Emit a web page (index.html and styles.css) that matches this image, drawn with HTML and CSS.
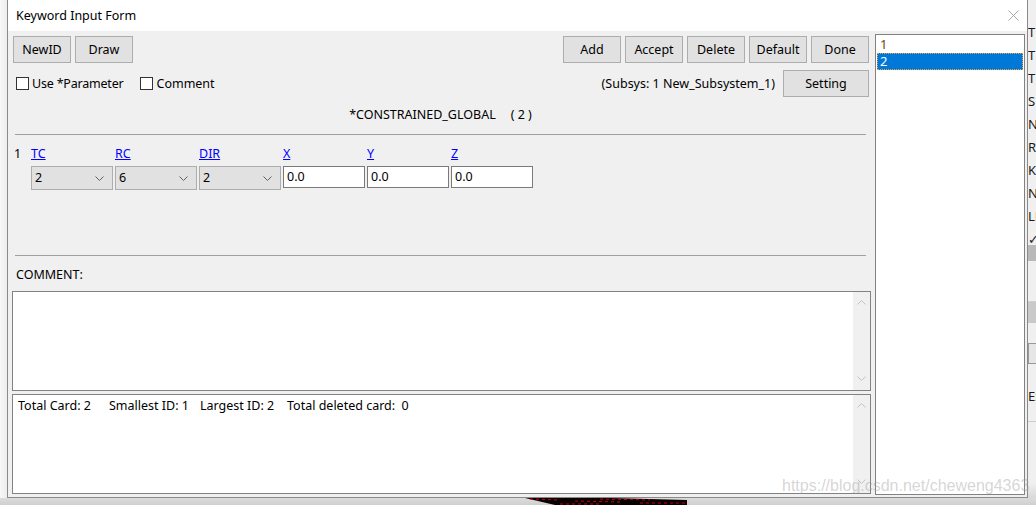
FILE: index.html
```html
<!DOCTYPE html>
<html>
<head>
<meta charset="utf-8">
<title>Keyword Input Form</title>
<link rel="stylesheet" href="styles.css">
</head>
<body>
<div class="desktop">
  <div class="left-bg"></div>

  <div class="window">
    <div class="titlebar">
      <span class="title">Keyword Input Form</span>
      <svg class="close" width="11" height="11" viewBox="0 0 11 11"><path d="M0.5 0.5 L10.5 10.5 M10.5 0.5 L0.5 10.5" stroke="#a8a8a8" stroke-width="1" fill="none"/></svg>
    </div>

    <div class="client">
      <div class="main">
        <div class="toolbar">
          <div class="btn-group">
            <button class="btn">NewID</button>
            <button class="btn">Draw</button>
          </div>
          <div class="btn-group">
            <button class="btn">Add</button>
            <button class="btn">Accept</button>
            <button class="btn">Delete</button>
            <button class="btn">Default</button>
            <button class="btn">Done</button>
          </div>
        </div>

        <div class="options">
          <label class="check"><span class="box"></span><span class="check-text">Use *Parameter</span></label>
          <label class="check check-second"><span class="box"></span>Comment</label>
          <span class="subsys">(Subsys: 1 New_Subsystem_1)</span>
          <button class="btn btn-wide">Setting</button>
        </div>

        <div class="keyword">*CONSTRAINED_GLOBAL<span class="count">( 2 )</span></div>

        <div class="sep sep-top"></div>

        <div class="card-grid card-labels">
          <span class="rownum">1</span>
          <a class="field-link">TC</a>
          <a class="field-link">RC</a>
          <a class="field-link">DIR</a>
          <a class="field-link">X</a>
          <a class="field-link">Y</a>
          <a class="field-link">Z</a>
        </div>
        <div class="card-grid card-fields">
          <span></span>
          <div class="combo"><span>2</span><svg width="9" height="5" viewBox="0 0 9 5"><path d="M0.5 0.5 L4.5 4.5 L8.5 0.5" stroke="#606060" fill="none"/></svg></div>
          <div class="combo"><span>6</span><svg width="9" height="5" viewBox="0 0 9 5"><path d="M0.5 0.5 L4.5 4.5 L8.5 0.5" stroke="#606060" fill="none"/></svg></div>
          <div class="combo"><span>2</span><svg width="9" height="5" viewBox="0 0 9 5"><path d="M0.5 0.5 L4.5 4.5 L8.5 0.5" stroke="#606060" fill="none"/></svg></div>
          <div class="textfield">0.0</div>
          <div class="textfield">0.0</div>
          <div class="textfield">0.0</div>
        </div>

        <div class="sep sep-bottom"></div>

        <div class="comment-label">COMMENT:</div>

        <div class="textbox comment-box">
          <div class="textbox-body"></div>
          <div class="vscroll">
            <svg width="9" height="5" viewBox="0 0 9 5"><path d="M0.5 4.5 L4.5 0.5 L8.5 4.5" stroke="#c2c2c2" fill="none"/></svg>
            <svg width="9" height="5" viewBox="0 0 9 5"><path d="M0.5 0.5 L4.5 4.5 L8.5 0.5" stroke="#c2c2c2" fill="none"/></svg>
          </div>
        </div>

        <div class="textbox status-box">
          <div class="textbox-body status-text">
            <span class="stat s1">Total Card: 2</span><span class="stat s2">Smallest ID: 1</span><span class="stat s3">Largest ID: 2</span><span class="stat">Total deleted card:&nbsp; 0</span>
          </div>
          <div class="vscroll">
            <svg width="9" height="5" viewBox="0 0 9 5"><path d="M0.5 4.5 L4.5 0.5 L8.5 4.5" stroke="#c2c2c2" fill="none"/></svg>
            <svg width="9" height="5" viewBox="0 0 9 5"><path d="M0.5 0.5 L4.5 4.5 L8.5 0.5" stroke="#c2c2c2" fill="none"/></svg>
          </div>
        </div>
      </div>

      <div class="listbox">
        <div class="list-item item-first">1</div>
        <div class="list-item selected">2</div>
      </div>
    </div>

    <div class="watermark">https://blog.csdn.net/cheweng4363</div>
  </div>

  <div class="right-bg">
    <div class="peek-letters">
      <span>T</span><span>T</span><span>T</span><span>S</span><span>N</span><span>R5</span><span>KI</span><span>NA</span><span>LE</span><span>✓</span>
    </div>
    <div class="peek-band band1"></div>
    <div class="peek-gap gap1"></div>
    <div class="peek-band band2"></div>
    <div class="peek-gap gap2"></div>
    <div class="peek-box"></div>
    <div class="peek-ex">Ex</div>
    <div class="peek-rest"></div>
  </div>

  <div class="bottom-bg">
    <svg width="1036" height="7" viewBox="0 0 1036 7">
      <polygon points="525,0 610,0 687,2 687,7 555,7" fill="#0a0000"/>
      <path d="M530 1 L560 2 M575 3 L620 4 M600 1 L650 2 M640 5 L685 5 M560 6 L600 6" stroke="#c4001a" stroke-width="1" stroke-dasharray="3 3"/>
    </svg>
  </div>
</div>
</body>
</html>
```

FILE: styles.css
```css
* {
  box-sizing: border-box;
  margin: 0;
  padding: 0;
}

html, body {
  width: 1036px;
  height: 505px;
  overflow: hidden;
}

body {
  font-family: "Noto Sans", "DejaVu Sans", sans-serif;
  font-size: 12.5px;
  color: #000;
  background: #f4f4f4;
}

.desktop {
  display: grid;
  grid-template-columns: 7px 1021px 8px;
  grid-template-rows: 498px 7px;
  width: 1036px;
  height: 505px;
}

.left-bg {
  background: linear-gradient(to right, #f7f7f7, #ededed);
}

/* ---------- window ---------- */
.window {
  position: relative;
  display: flex;
  flex-direction: column;
  border: 1px solid #8a8a8a;
  border-top: none;
  background: #f0f0f0;
}

.titlebar {
  flex: none;
  height: 31px;
  background: #fff;
  display: flex;
  align-items: center;
  justify-content: space-between;
  padding: 0 8px;
}

.title {
  line-height: 16px;
}

.close {
  display: block;
}

.client {
  flex: 1;
  display: flex;
  align-items: flex-start;
}

.main {
  width: 863px;
  display: flex;
  flex-direction: column;
}

/* ---------- buttons ---------- */
.btn {
  width: 58px;
  height: 27px;
  border: 1px solid #adadad;
  background: #e1e1e1;
  font-family: inherit;
  font-size: 12.5px;
  color: #000;
  line-height: 16px;
}

.btn-wide {
  width: 86px;
}

.toolbar {
  margin-top: 5px;
  padding: 0 2px 0 5px;
  display: flex;
  justify-content: space-between;
}

.btn-group {
  display: flex;
  gap: 4px;
}

/* ---------- options row ---------- */
.options {
  margin-top: 7px;
  padding: 0 2px 0 8px;
  display: flex;
  align-items: center;
  height: 27px;
}

.check {
  display: flex;
  align-items: center;
  gap: 3px;
  line-height: 16px;
}

.check-text {
  letter-spacing: -0.2px;
}

.check-second {
  margin-left: 17px;
}

.box {
  width: 13px;
  height: 13px;
  border: 1px solid #333;
  background: #fff;
}

.subsys {
  margin-left: auto;
  margin-right: 8px;
  line-height: 16px;
}

/* ---------- keyword ---------- */
.keyword {
  margin-top: 10px;
  line-height: 16px;
  text-align: center;
  padding-left: 2px;
}

.count {
  margin-left: 15px;
}

.sep {
  margin-left: 7px;
  width: 851px;
  height: 1px;
  background: #a0a0a0;
}

.sep-top {
  margin-top: 11px;
}

.sep-bottom {
  margin-top: 65px;
}

/* ---------- card ---------- */
.card-grid {
  display: grid;
  grid-template-columns: 15px repeat(6, 82px);
  column-gap: 2px;
  padding-left: 6px;
}

.card-labels {
  margin-top: 11px;
  line-height: 16px;
}

.field-link {
  color: #0000ff;
  text-decoration: underline;
}

.card-fields {
  margin-top: 4px;
  align-items: start;
}

.combo {
  height: 24px;
  border: 1px solid #adadad;
  background: #e1e1e1;
  display: flex;
  align-items: center;
  justify-content: space-between;
  padding: 0 8px 0 3px;
  line-height: 16px;
}

.textfield {
  height: 22px;
  border: 1px solid #7a7a7a;
  background: #fff;
  padding: 1px 0 0 3px;
  line-height: 17px;
}

/* ---------- comment / status ---------- */
.comment-label {
  margin-top: 11px;
  padding-left: 8px;
  line-height: 16px;
}

.textbox {
  margin-left: 4px;
  width: 859px;
  height: 100px;
  border: 1px solid #828282;
  background: #fff;
  display: flex;
}

.comment-box {
  margin-top: 8px;
}

.status-box {
  margin-top: 3px;
}

.textbox-body {
  flex: 1;
}

.status-text {
  padding: 3px 0 0 5px;
  line-height: 16px;
  white-space: nowrap;
}

.stat {
  display: inline-block;
}

.s1 { width: 91px; }
.s2 { width: 91px; }
.s3 { width: 87px; }

.vscroll {
  width: 17px;
  background: #f0f0f0;
  display: flex;
  flex-direction: column;
  justify-content: space-between;
  align-items: center;
  padding: 8px 0 9px;
}

.vscroll svg {
  display: block;
}

/* ---------- listbox ---------- */
.listbox {
  margin-top: 3px;
  margin-left: 4px;
  width: 150px;
  height: 461px;
  border: 1px solid #828282;
  background: #fff;
  padding: 1px;
}

.list-item {
  height: 17px;
  line-height: 17px;
  padding-left: 3px;
  font-size: 13px;
}

.item-first {
  color: #7a4410;
}

.selected {
  background: #0078d7;
  color: #fff;
  outline: 1px dotted #f3a33a;
  outline-offset: -1px;
}

/* ---------- watermark ---------- */
.watermark {
  position: absolute;
  left: 774px;
  top: 477px;
  font-family: "Liberation Sans", Arial, sans-serif;
  font-size: 16px;
  line-height: 18px;
  color: rgba(150, 150, 150, 0.4);
  white-space: nowrap;
  pointer-events: none;
}

/* ---------- right peek of background app ---------- */
.right-bg {
  background: #f0f0f0;
  overflow: hidden;
  display: flex;
  flex-direction: column;
}

.peek-letters {
  display: flex;
  flex-direction: column;
  padding-top: 21px;
  height: 245px;
  font-size: 13px;
  line-height: 23px;
  color: #1a1a1a;
  white-space: nowrap;
}

.peek-band {
  flex: none;
  background: #b9b9b9;
}

.band1 { height: 16px; }
.band2 { height: 21px; background: #c9c9c9; }

.peek-gap { flex: none; }

.gap1 {
  height: 41px;
  border-bottom: 1px solid #d0d0d0;
}

.gap2 { height: 20px; }

.peek-box {
  flex: none;
  height: 21px;
  border: 1px solid #999;
  border-right: none;
  background: #e6e6e6;
}

.peek-ex {
  flex: none;
  margin-top: 23px;
  font-size: 13px;
  line-height: 18px;
  color: #1a1a1a;
  border-bottom: 1px solid #ccc;
  padding-bottom: 16px;
  white-space: nowrap;
}

.peek-rest {
  flex: 1;
  background: linear-gradient(to bottom, #f0f0f0 80%, #d8d8d8);
}

.bottom-bg {
  grid-column: 1 / 4;
  background: linear-gradient(to bottom, #dcdcdc, #cfcfcf);
  overflow: hidden;
}

.bottom-bg svg {
  display: block;
}
```
